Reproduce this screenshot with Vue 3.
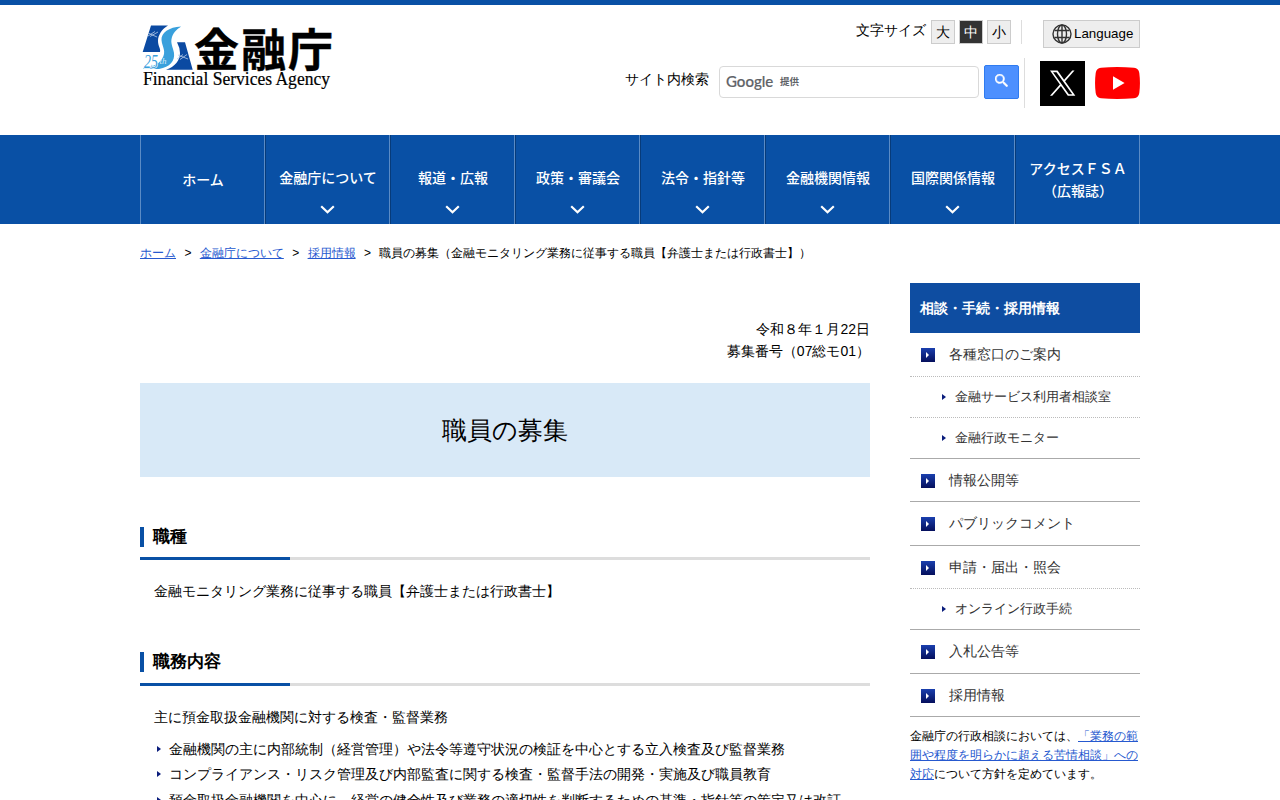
<template>
  <div class="page">
    <header class="header">
      <div class="inner">
        <a class="logo">
          <svg width="196" height="74" viewBox="0 0 196 74">
            <path fill="#0b4aa2" d="M11 5.500 H28 C22 9 18 15 18 21 C18 26 21 29 20 32 H2.700 Z" />
            <path fill="#0b4aa2" d="M37 22.300 H45 L52.700 49.700 H26 C35 47 40 40 40 33 Q40 28 37 22.300 Z" />
            <path fill="#39a0dc" d="M41 6.500 C29 7 21 13 21.500 20 C22 27 27 31 22 39 C18 45 12 47 4 47.500 L3 49 H19 C30 47 35 41 34 33 C33 27 30 23 32 17 C34 11 38 9 41 6.500 Z" />
            <path fill="none" stroke="#b9cde8" stroke-width=".8" d="M8 16 L15 11.500 M10 16.500 L18 12 M8 13 L17 17 M37 39 L43 34.500 M40 39.500 L47 34.500 M38 35 L48 39" />
            <text class="years" x="4" y="48" textLength="14" lengthAdjust="spacingAndGlyphs">25</text>
            <text class="th" x="19.500" y="44">th</text>
            <text class="name" x="54" y="46.500" textLength="139">金融庁</text>
            <text class="name-en" x="3" y="64.500" textLength="187" lengthAdjust="spacingAndGlyphs">Financial Services Agency</text>
          </svg>
        </a>
        <div class="tools">
          <div class="tools-top">
            <span class="size-label">文字サイズ</span>
            <button v-for="size in sizes" :key="size" class="size" :class="{ active: size === current }" @click="current = size">{{ size }}</button>
            <span class="separator"></span>
            <button class="language">
              <svg width="20" height="20" viewBox="0 0 20 20" fill="none" stroke="#333" stroke-width="1.4">
                <circle cx="10" cy="10" r="9" />
                <ellipse cx="10" cy="10" rx="4.5" ry="9" />
                <path d="M10 1 V19 M2.500 6.500 H17.500 M2.500 13.500 H17.500" />
              </svg>
              <span>Language</span>
            </button>
          </div>
          <div class="tools-bottom">
            <label class="search-label">サイト内検索</label>
            <div class="search-box">
              <span class="google">Google</span>
              <span class="offer">提供</span>
            </div>
            <button class="search-btn">
              <svg width="13" height="13" viewBox="0 0 13 13">
                <path fill="#fff" stroke="#fff" stroke-width=".4" d="M4.800 0a4.800 4.800 0 1 0 2.900 8.600l.2.2v.5L11.700 13l1.300-1.300L9.300 7.900h-.5l-.2-.2A4.800 4.800 0 0 0 4.800 0zm0 1.500a3.300 3.300 0 1 1 0 6.600 3.300 3.300 0 0 1 0-6.600z" />
              </svg>
            </button>
            <span class="separator tall"></span>
            <a class="x-link">
              <svg width="45" height="45" viewBox="0 0 45 45">
                <rect width="45" height="45" />
                <g transform="translate(10 9.500) scale(1.080)" fill="#fff">
                  <path d="M14.258 10.152 23.176 0h-2.113l-7.747 8.813L7.133 0H0l9.352 13.328L0 23.973h2.113l8.176-9.309 6.531 9.309h7.133zM2.875 1.560h3.246l14.943 20.950h-3.246z" transform="scale(.98)" />
                </g>
              </svg>
            </a>
            <a class="yt-link">
              <svg width="45" height="32" viewBox="0 0 45 32">
                <path fill="#f00" d="M6 .7 Q22 -.7 39 .7 Q43.500 1 44.300 6 Q45.600 16 44.300 26 Q43.500 31 39 31.300 Q22 32.700 6 31.300 Q1.500 31 .7 26 Q-.6 16 .7 6 Q1.500 1 6 .7 Z" />
                <path fill="#fff" d="M18 9.200 L29.600 16 L18 22.800 Z" />
              </svg>
            </a>
          </div>
        </div>
      </div>
    </header>

    <nav class="gnav">
      <ul>
        <li v-for="item in nav" :key="item.label" :class="{ plain: !item.sub }">
          <span class="gnav-label">{{ item.label }}<template v-if="item.second"><br>{{ item.second }}</template></span>
          <svg v-if="item.sub" width="15" height="9" viewBox="0 0 15 9">
            <path d="M1.200 1.200 L7.500 7.200 L13.800 1.200" fill="none" stroke="#fff" stroke-width="2.200" />
          </svg>
        </li>
      </ul>
    </nav>

    <div class="breadcrumb">
      <template v-for="crumb in crumbs" :key="crumb"><a>{{ crumb }}</a><i>&gt;</i></template>
      <span>職員の募集（金融モニタリング業務に従事する職員【弁護士または行政書士】）</span>
    </div>

    <div class="columns">
      <main>
        <p class="date">令和８年１月22日<br>募集番号（07総モ01）</p>
        <h1>職員の募集</h1>
        <h2>職種</h2>
        <p class="text">金融モニタリング業務に従事する職員【弁護士または行政書士】</p>
        <h2 class="second">職務内容</h2>
        <p class="text">主に預金取扱金融機関に対する検査・監督業務</p>
        <ul class="duties">
          <li v-for="duty in duties" :key="duty">{{ duty }}</li>
        </ul>
      </main>
      <aside>
        <h3>相談・手続・採用情報</h3>
        <ul class="side">
          <li v-for="item in side" :key="item.label" :class="{ sub: item.sub, dotted: item.dotted }">
            <span class="mark"></span>{{ item.label }}
          </li>
        </ul>
        <p class="note">金融庁の行政相談においては、<a>「業務の範囲や程度を明らかに超える苦情相談」への対応</a>について方針を定めています。</p>
      </aside>
    </div>
  </div>
</template>

<script setup>
    import { ref } from 'vue'

    const sizes = ['大', '中', '小']
    const current = ref('中')

    const nav = [
        { label: 'ホーム' },
        { label: '金融庁について', sub: true },
        { label: '報道・広報', sub: true },
        { label: '政策・審議会', sub: true },
        { label: '法令・指針等', sub: true },
        { label: '金融機関情報', sub: true },
        { label: '国際関係情報', sub: true },
        { label: 'アクセスＦＳＡ', second: '（広報誌）' }
    ]

    const crumbs = ['ホーム', '金融庁について', '採用情報']

    const duties = [
        '金融機関の主に内部統制（経営管理）や法令等遵守状況の検証を中心とする立入検査及び監督業務',
        'コンプライアンス・リスク管理及び内部監査に関する検査・監督手法の開発・実施及び職員教育',
        '預金取扱金融機関を中心に、経営の健全性及び業務の適切性を判断するための基準・指針等の策定又は改訂'
    ]

    const side = [
        { label: '各種窓口のご案内', dotted: true },
        { label: '金融サービス利用者相談室', sub: true, dotted: true },
        { label: '金融行政モニター', sub: true },
        { label: '情報公開等' },
        { label: 'パブリックコメント' },
        { label: '申請・届出・照会', dotted: true },
        { label: 'オンライン行政手続', sub: true },
        { label: '入札公告等' },
        { label: '採用情報' }
    ]
</script>

<style>
    body {
        margin: 0;
        overflow: hidden;
    }
</style>

<style scoped>
    .page {
        height: 800px;
        overflow: hidden;
        background: #fff;
        color: #000;
        border-top: 5px solid #0950a5;
        box-sizing: border-box;
        font-family: "Liberation Sans", sans-serif;
        font-size: 14px;
        line-height: 22px;
    }
    ul, p, h1, h2, h3 {
        margin: 0;
        padding: 0;
        list-style: none;
    }
    button {
        font: inherit;
        padding: 0;
        box-sizing: border-box;
        color: #000;
    }
    svg {
        display: block;
    }
    a {
        color: #2659cf;
        text-decoration: underline;
    }
    .inner {
        width: 1000px;
        height: 130px;
        margin: 0 auto;
        display: flex;
        justify-content: space-between;
    }
    .logo {
        padding-top: 15px;

        & .name {
            font: 700 45px "Noto Sans CJK JP", sans-serif;
            stroke: #000;
            stroke-width: 0.4;
        }
        & .name-en {
            font: 18px "Liberation Serif", serif;
            stroke: #000;
            stroke-width: 0.2;
        }
        & .years, & .th {
            font: italic 18px "Liberation Serif", serif;
            fill: #39a0dc;
            stroke: #fff;
            stroke-width: 1.5;
            paint-order: stroke;
        }
        & .th {
            font-size: 9px;
            stroke: none;
            fill: #d5ecfa;
        }
    }
    .tools-top {
        display: flex;
        justify-content: flex-end;
        height: 28px;
        padding-top: 15px;
    }
    .size-label {
        line-height: 21px;
        margin-right: 5px;
    }
    .size {
        width: 24px;
        height: 24px;
        margin-right: 4px;
        background: #eee;
        border: 1px solid #ccc;

        &.active {
            background: #333;
            color: #fff;
        }
    }
    .separator {
        width: 1px;
        height: 24px;
        margin: 0 21px 0 6px;
        background: #ddd;
    }
    .language {
        width: 97px;
        height: 28px;
        display: flex;
        align-items: center;
        gap: 2px;
        padding-left: 8px;
        font-size: 13.33px;
        background: #eee;
        border: 1px solid #ccc;
    }
    .tools-bottom {
        display: flex;
        justify-content: flex-end;
        align-items: flex-start;
        padding-top: 10px;
    }
    .search-label {
        margin: 10px 10px 0 0;
    }
    .search-box {
        display: flex;
        align-items: center;
        width: 260px;
        height: 32px;
        margin-top: 8px;
        padding: 0 0 2px 6px;
        box-sizing: border-box;
        border: 1px solid #d9d9d9;
        border-radius: 4px;
        color: #5f6368;
    }
    .google {
        width: 54px;
        font: 500 15px Lato, sans-serif;
        -webkit-text-stroke: 0.2px #5f6368;
    }
    .offer {
        font: 700 9.500px "Noto Sans CJK JP", sans-serif;
    }
    .search-btn {
        width: 35px;
        height: 34px;
        margin: 7px 5px 0 5px;
        padding: 0 0 3px 10px;
        background: #4d90fe;
        border: 1px solid #2f7bf0;
        border-radius: 2px;
    }
    .separator.tall {
        height: 50px;
        margin: 0 15px 0 0;
    }
    .x-link {
        margin: 3px 10px 0 0;
    }
    .yt-link {
        margin-top: 9px;
    }

    .gnav {
        height: 89px;
        background: #0950a5;

        & ul {
            display: flex;
            width: 1000px;
            margin: 0 auto;
        }
        & li {
            display: flex;
            flex-direction: column;
            align-items: center;
            width: 125px;
            height: 89px;
            padding-top: 31px;
            box-sizing: border-box;
            border-left: 1px solid #073b7a;
            border-right: 1px solid #5a8bc5;
            color: #fff;
            font: 500 14px/22px "Noto Sans CJK JP", sans-serif;
            text-align: center;
        }
        & li:first-child {
            border-left-color: #5a8bc5;
        }
        & li.plain {
            padding-top: 33px;
        }
        & li:last-child {
            padding-top: 22px;
        }
        & .gnav-label {
            padding-left: 1px;
        }
        & svg {
            margin-top: 17px;
        }
    }

    .breadcrumb {
        width: 1000px;
        height: 20px;
        margin: 19px auto 0;
        font-size: 12px;
        line-height: 20px;

        & i {
            margin: 0 8.400px;
            font-style: normal;
        }
    }

    .columns {
        display: flex;
        justify-content: space-between;
        width: 1000px;
        margin: 20px auto 0;
    }
    main {
        width: 730px;
    }
    .date {
        padding-top: 35px;
        text-align: right;
    }
    h1 {
        height: 94px;
        margin-top: 21px;
        background: #d8e9f7;
        font-size: 25.200px;
        font-weight: normal;
        line-height: 94px;
        text-align: center;
    }
    h2 {
        position: relative;
        height: 30px;
        margin-top: 50px;
        border-bottom: 3px solid #ddd;
        font-size: 17px;
        line-height: 20px;

        &:before {
            content: "";
            display: inline-block;
            width: 4px;
            height: 20px;
            margin-right: 9px;
            background: #0950a5;
            vertical-align: top;
        }
        &:after {
            content: "";
            position: absolute;
            left: 0;
            bottom: -3px;
            width: 150px;
            height: 3px;
            background: #0950a5;
        }
        &.second {
            height: 31px;
        }
    }
    .text {
        padding: 20px 0 0 14px;
    }
    .duties {
        margin: 8px 0 0 17px;

        & li {
            display: flex;
            align-items: center;
            height: 25.600px;
            white-space: nowrap;
        }
        & li:before {
            content: "";
            margin-right: 8px;
            border: solid transparent;
            border-width: 3px 0 3px 4px;
            border-left-color: #0a1d7c;
        }
    }

    aside {
        width: 230px;
    }
    h3 {
        height: 50px;
        padding-left: 10px;
        background: #0e4da1;
        color: #fff;
        font-size: 14px;
        line-height: 50px;
    }
    .side li {
        display: flex;
        align-items: center;
        height: 43.500px;
        padding-left: 11px;
        box-sizing: border-box;
        border-bottom: 1px solid #aaa;
        color: #333;

        & .mark {
            display: flex;
            align-items: center;
            justify-content: center;
            width: 14px;
            height: 14px;
            margin: 2px 14px 0 0;
            background: linear-gradient(#1a3fae, #050f5c);
        }
        & .mark:before {
            content: "";
            margin-right: 1px;
            border: solid transparent;
            border-width: 3px 0 3px 3px;
            border-left-color: #fff;
        }
        &.dotted {
            border-bottom: 1px dotted #bbb;
        }
        &.sub {
            height: 41px;
            padding-left: 32px;
            font-size: 13px;
        }
        &.sub .mark {
            width: 4px;
            height: 6px;
            margin: 0 9px 0 0;
            background: none;
        }
        &.sub .mark:before {
            margin-right: 0;
            border-left-width: 4px;
            border-left-color: #0a1d7c;
        }
    }
    .note {
        padding-top: 10px;
        font-size: 12px;
        line-height: 19px;
    }
</style>
